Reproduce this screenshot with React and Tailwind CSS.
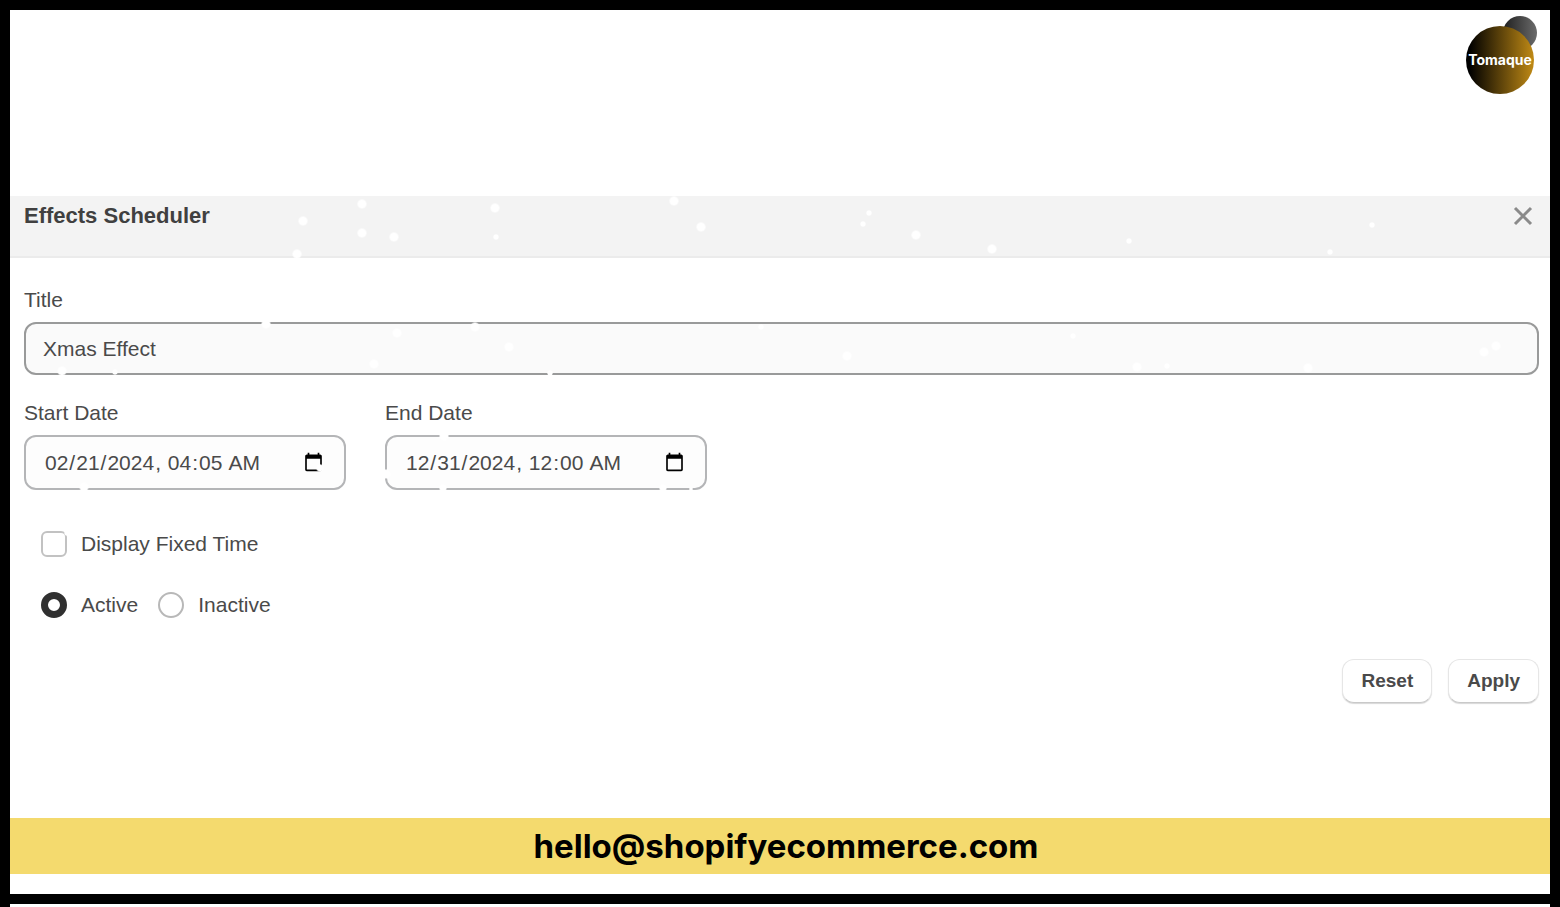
import { useState } from 'react';

const initialForm = {
  title: 'Xmas Effect',
  start: '2024-02-21T04:05',
  end: '2024-12-31T00:00',
  fixedTime: false,
  status: 'active',
};

// x, y, radius of every flake, measured from the panel's top left corner
const flakes = [
  [293, 25, 5], [352, 8, 5], [352, 37, 5], [384, 41, 5], [485, 12, 5],
  [486, 41, 3], [287, 58, 5], [664, 5, 5], [691, 31, 5], [859, 17, 3],
  [853, 28, 3], [906, 39, 5], [982, 53, 5], [1119, 45, 3], [1320, 56, 3],
  [1362, 29, 3],
  [256, 128, 5], [465, 131, 5], [387, 137, 5], [499, 151, 5], [364, 168, 5],
  [52, 175, 5], [105, 176, 3], [540, 177, 3], [751, 131, 3], [837, 160, 5],
  [1063, 140, 3], [1127, 171, 5], [1157, 170, 3], [1298, 172, 5],
  [1474, 156, 5], [1486, 150, 5],
  [74, 291, 5], [434, 240, 5], [433, 292, 4], [653, 292, 4], [681, 293, 2],
  [376, 278, 5], [310, 272, 4], [57, 337, 3],
];

function Logo() {
  return (
    <svg className="h-20 w-[74px]" viewBox="0 0 74 80" role="img" aria-label="Tomaque">
      <defs>
        <linearGradient id="gold" x1="0" x2="1" y1="0" y2="0">
          <stop offset="0.05" stopColor="#000000" />
          <stop offset="1" stopColor="#c08a15" />
        </linearGradient>
        <linearGradient id="steel" x1="0" x2="1" y1="0" y2="0">
          <stop offset="0" stopColor="#1f1f1f" />
          <stop offset="1" stopColor="#6b6b6b" />
        </linearGradient>
      </defs>
      <circle cx="55" cy="17" r="17" fill="url(#steel)" />
      <circle cx="35" cy="44" r="34" fill="url(#gold)" />
      <text x="35" y="49" textAnchor="middle" fill="#ffffff" className="font-['Inter',sans-serif] text-[14px] font-bold">
        Tomaque
      </text>
    </svg>
  );
}

function Snow() {
  return (
    <svg className="pointer-events-none absolute inset-0 h-full w-full" aria-hidden="true">
      <defs>
        <radialGradient id="flake">
          <stop offset="0.7" stopColor="#ffffff" />
          <stop offset="1" stopColor="#ffffff" stopOpacity="0.3" />
        </radialGradient>
      </defs>
      {flakes.map(([x, y, r]) => (
        <circle key={`${x}-${y}`} cx={x} cy={y} r={r} fill="url(#flake)" />
      ))}
    </svg>
  );
}

function DateField({ id, label, value, onChange }) {
  return (
    <div className="flex w-[322px] flex-col gap-2">
      <label htmlFor={id}>{label}</label>
      <input
        id={id}
        type="datetime-local"
        value={value}
        onChange={onChange}
        className="h-[55px] w-full rounded-xl border-2 border-[#b4b5b7] bg-[#fdfdfd] px-[18px]"
      />
    </div>
  );
}

function StatusOption({ value, label, checked, onChange }) {
  return (
    <label className="flex items-center gap-3.5">
      <input
        type="radio"
        name="status"
        value={value}
        checked={checked}
        onChange={onChange}
        className="size-[26px] appearance-none rounded-full border-2 border-[#b8b8b8] bg-white checked:border-7 checked:border-[#303030]"
      />
      {label}
    </label>
  );
}

export default function App() {
  const [form, setForm] = useState(initialForm);
  const update = (key, value) => setForm({ ...form, [key]: value });

  const buttonClass =
    'h-11 rounded-xl border border-[#e6e6e6] border-b-[#c9c9c9] bg-white px-[18px] text-[19px] font-bold shadow-[0_1px_1px_#d8d8d8]';

  return (
    <div className="flex min-h-screen flex-col border-x-10 border-t-10 border-black bg-white font-['Liberation_Sans',sans-serif] text-[21px] leading-7 text-[#4a4a4a]">
      {/* Brand */}
      <header className="flex h-[186px] items-start justify-end pt-1.5 pr-[11px]">
        <Logo />
      </header>

      {/* Scheduler panel */}
      <section className="relative">
        <div className="flex h-[62px] items-start justify-between border-b-2 border-[#ebebeb] bg-[#f3f3f3] pt-1.5 pr-[15px] pl-3.5">
          <h1 className="text-[22px] font-bold text-[#404040]">Effects Scheduler</h1>
          <button type="button" aria-label="Close" className="flex h-7 w-6 items-center justify-center">
            <svg className="size-6" viewBox="0 0 24 24" fill="none" stroke="#8a8a8a" strokeWidth="3">
              <path d="M4 4l16 16M20 4L4 20" />
            </svg>
          </button>
        </div>

        <form className="flex flex-col pt-7 pr-[11px] pl-3.5" onSubmit={(e) => e.preventDefault()}>
          <div className="flex flex-col gap-2">
            <label htmlFor="title">Title</label>
            <input
              id="title"
              type="text"
              value={form.title}
              onChange={(e) => update('title', e.target.value)}
              className="h-[53px] w-full rounded-xl border-2 border-[#999a9a] bg-[#fafafa] px-[17px]"
            />
          </div>

          <div className="mt-6 flex flex-wrap gap-[39px]">
            <DateField id="start" label="Start Date" value={form.start} onChange={(e) => update('start', e.target.value)} />
            <DateField id="end" label="End Date" value={form.end} onChange={(e) => update('end', e.target.value)} />
          </div>

          <label className="mt-10 flex items-center gap-3.5 self-start pl-[17px]">
            <input
              type="checkbox"
              checked={form.fixedTime}
              onChange={(e) => update('fixedTime', e.target.checked)}
              className="size-[26px] appearance-none rounded-md border-2 border-[#c2c2c2] bg-white checked:bg-[#303030]"
            />
            Display Fixed Time
          </label>

          <div className="mt-[33px] flex gap-5 pl-[17px]">
            <StatusOption
              value="active"
              label="Active"
              checked={form.status === 'active'}
              onChange={() => update('status', 'active')}
            />
            <StatusOption
              value="inactive"
              label="Inactive"
              checked={form.status === 'inactive'}
              onChange={() => update('status', 'inactive')}
            />
          </div>

          <div className="mt-10 flex justify-end gap-4">
            <button type="button" className={buttonClass} onClick={() => setForm(initialForm)}>
              Reset
            </button>
            <button type="submit" className={buttonClass}>
              Apply
            </button>
          </div>
        </form>

        <Snow />
      </section>

      {/* Contact strip */}
      <footer className="mt-auto mb-[3px] border-b-10 border-black pb-5">
        <div className="flex h-14 items-center justify-center bg-[#f4da6e] pl-3">
          <a href="mailto:hello@shopifyecommerce.com" className="font-['Inter',sans-serif] text-[33px] leading-10 font-bold text-black">
            hello@shopifyecommerce.com
          </a>
        </div>
      </footer>
    </div>
  );
}
